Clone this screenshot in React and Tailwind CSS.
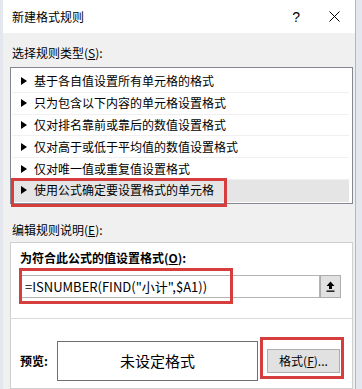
import React from 'react';

const rules = [
  '基于各自值设置所有单元格的格式',
  '只为包含以下内容的单元格设置格式',
  '仅对排名靠前或靠后的数值设置格式',
  '仅对高于或低于平均值的数值设置格式',
  '仅对唯一值或重复值设置格式',
  '使用公式确定要设置格式的单元格',
];

const font = { fontFamily: '"Noto Sans CJK SC", "Noto Sans", sans-serif' };

function Arrow() {
  return (
    <svg width="6" height="8" viewBox="0 0 6 8" className="shrink-0">
      <path d="M0 0 L6 4 L0 8 Z" fill="#000" />
    </svg>
  );
}

export default function App() {
  return (
    <div
      className="relative w-[362px] h-[389px] overflow-hidden bg-[#e4e8ee] flex text-[12px] text-black"
      style={font}
    >
      {/* dialog */}
      <div className="ml-[3px] w-[353px] h-full flex flex-col bg-[#f0f0f0] border-r border-[#9cbcdc]">
        {/* title bar */}
        <div className="h-[33px] shrink-0 bg-white flex items-center pl-[9px]">
          <span className="text-[12px] leading-none">新建格式规则</span>
          <span className="ml-auto mr-[29px] text-[14px] leading-none" style={{ fontFamily: '"Liberation Sans", sans-serif' }}>?</span>
          <svg width="11" height="11" viewBox="0 0 11 11" className="mr-[15px]">
            <path d="M0.5 0.5 L10.5 10.5 M10.5 0.5 L0.5 10.5" stroke="#000" strokeWidth="1" />
          </svg>
        </div>

        {/* body */}
        <div className="flex flex-col px-[7px] pt-[10px]">
          <div className="h-[20px] leading-[20px] pl-[2px]">
            选择规则类型(<span className="underline">S</span>):
          </div>

          {/* rule type list */}
          <div className="mt-[4px] w-[343px] h-[137px] bg-white border border-[#828790] pt-[3px] pl-px pr-[3px] flex flex-col">
            {rules.map((r, i) => (
              <div
                key={r}
                className={
                  'h-[21.8px] shrink-0 flex items-center gap-[7px] pl-[9px] border-b ' +
                  (i === 5 ? 'bg-[#e5e5e5] border-transparent' : 'border-[#f0f0f0]')
                }
              >
                <Arrow />
                <span className="leading-none">{r}</span>
              </div>
            ))}
          </div>

          <div className="mt-[16px] h-[20px] leading-[20px] pl-[2px]">
            编辑规则说明(<span className="underline">E</span>):
          </div>

          {/* rule description */}
          <div className="mt-[2px] w-[343px] h-[147px] bg-white border border-[#cfcfcf] flex flex-col">
            <div className="px-[9px] pt-[5px] flex flex-col">
              <div className="h-[20px] leading-[20px] font-bold">
                为符合此公式的值设置格式(<span className="underline">O</span>):
              </div>
              <div className="mt-[7px] ml-px flex h-[23px]">
                <div className="w-[299px] h-full border border-[#b4b4b4] flex items-center pl-[3px] text-[13px]">
                  =ISNUMBER(FIND("小计",$A1))
                </div>
                <div className="w-[21px] h-full bg-[#e1e1e1] border border-[#adadad] flex items-center justify-center">
                  <svg width="9" height="11" viewBox="0 0 9 11">
                    <path d="M4.5 0.5 L8.5 5 L6 5 L6 8 L3 8 L3 5 L0.5 5 Z" fill="#000" />
                    <rect x="0.5" y="9.5" width="8" height="1.3" fill="#000" />
                  </svg>
                </div>
              </div>
            </div>

            <div className="mt-[20px] h-px bg-[#dadada]" />

            <div className="mt-[22px] px-[9px] flex items-center">
              <span className="font-bold w-[37px]">预览:</span>
              <div className="w-[201px] h-[40px] border border-[#6f6f6f] flex items-center justify-center text-[15px]">
                未设定格式
              </div>
              <div className="ml-[9px] w-[73px] h-[24px] bg-[#e1e1e1] border border-[#adadad] flex items-center justify-center">
                格式(<span className="underline">F</span>)...
              </div>
            </div>
          </div>
        </div>
      </div>

      {/* red annotation boxes */}
      <div className="absolute left-[11px] top-[178px] w-[216px] h-[29px] border-[3px] border-[#d63e3e]" />
      <div className="absolute left-[19px] top-[268px] w-[214px] h-[36px] border-[3px] border-[#d63e3e]" />
      <div className="absolute left-[260px] top-[337px] w-[84px] h-[42px] border-[3px] border-[#d63e3e]" />
    </div>
  );
}
